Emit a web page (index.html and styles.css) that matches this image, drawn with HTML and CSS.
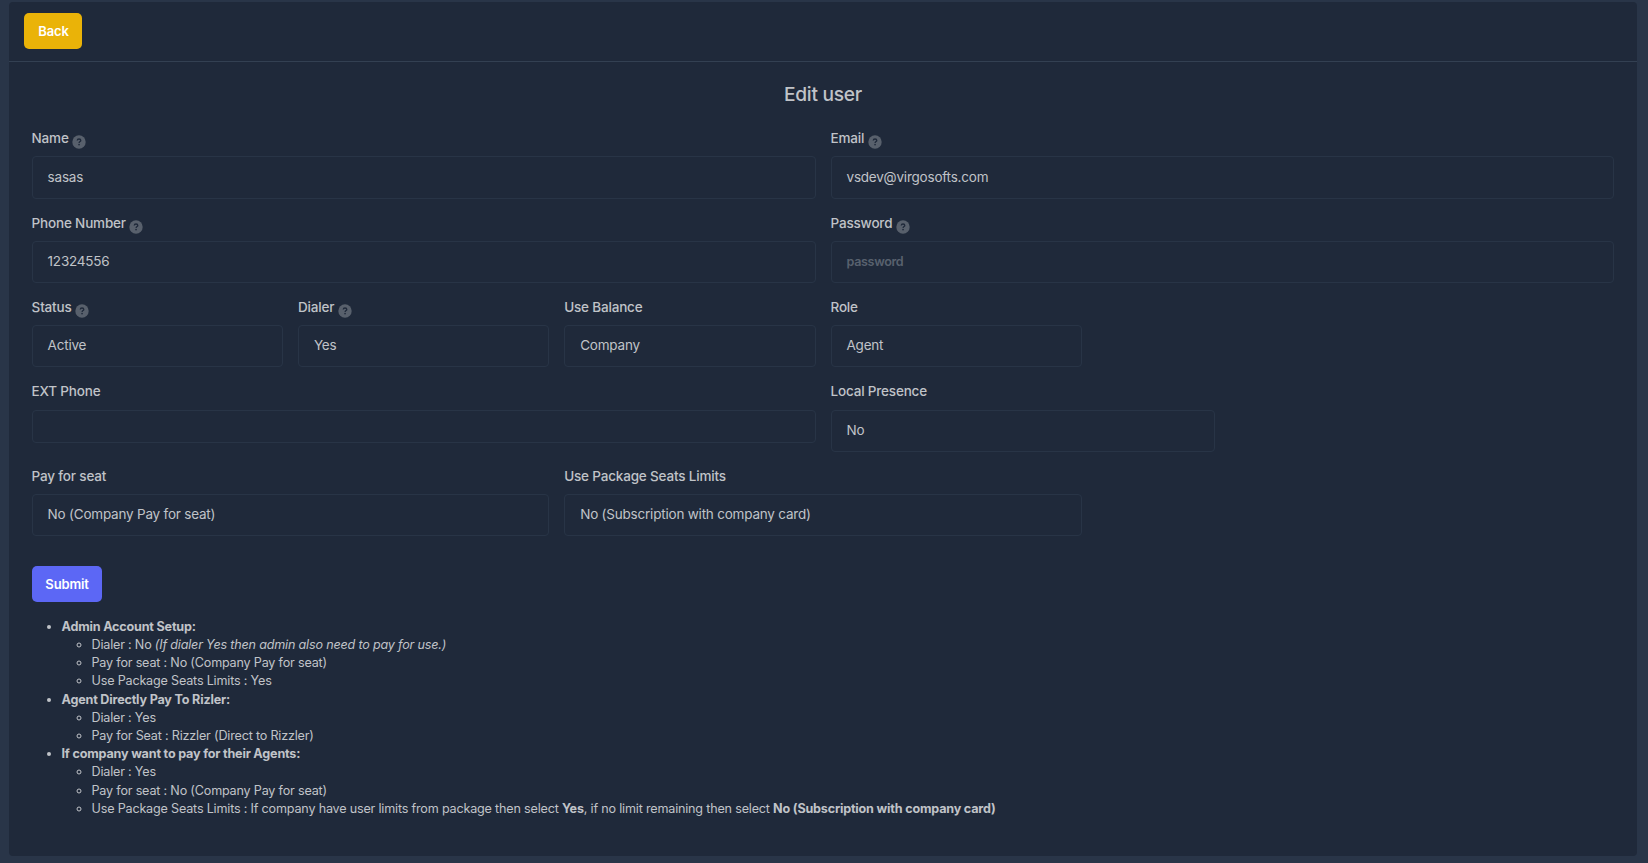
FILE: index.html
```
<!DOCTYPE html>
<html lang="en">
<head>
<meta charset="utf-8">
<title>Edit user</title>
<link rel="stylesheet" href="styles.css">
</head>
<body>
<svg width="0" height="0" class="sprite" aria-hidden="true">
  <symbol id="help" viewBox="0 0 14 14">
    <circle cx="7" cy="7" r="6.7" fill="#58606c"/>
    <path d="M5.2 5.5C5.3 4.4 6 4 7 4c1.100 0 1.800.5 1.800 1.400C8.800 6.600 7.100 6.600 7.100 7.900" fill="none" stroke="#1f293a" stroke-width="1.300"/>
    <rect x="6.300" y="8.900" width="1.500" height="1.400" fill="#1f293a"/>
  </symbol>
</svg>
<main class="card">
  <header class="card-header"><button class="btn btn-warning">Back</button></header>
  <div class="card-body">
    <h1 class="title">Edit user</h1>
    <form class="form">
      <div class="field half"><div class="label">Name <svg class="help"><use href="#help"/></svg></div><div class="control lead">sasas</div></div>
      <div class="field half"><div class="label">Email <svg class="help"><use href="#help"/></svg></div><div class="control lead">vsdev@virgosofts.com</div></div>
      <div class="field half"><div class="label">Phone Number <svg class="help"><use href="#help"/></svg></div><div class="control">12324556</div></div>
      <div class="field half"><div class="label">Password <svg class="help"><use href="#help"/></svg></div><div class="control placeholder">password</div></div>
      <div class="field sixth"><div class="label">Status <svg class="help"><use href="#help"/></svg></div><div class="control">Active</div></div>
      <div class="field sixth"><div class="label">Dialer <svg class="help"><use href="#help"/></svg></div><div class="control">Yes</div></div>
      <div class="field sixth"><div class="label">Use Balance</div><div class="control">Company</div></div>
      <div class="field sixth last"><div class="label">Role</div><div class="control">Agent</div></div>
      <div class="field half"><div class="label">EXT Phone</div><div class="control short"></div></div>
      <div class="field quarter last"><div class="label">Local Presence</div><div class="control">No</div></div>
      <div class="field third"><div class="label">Pay for seat</div><div class="control">No (Company Pay for seat)</div></div>
      <div class="field third"><div class="label">Use Package Seats Limits</div><div class="control">No (Subscription with company card)</div></div>
    </form>
    <div class="footer">
      <button class="btn btn-primary">Submit</button>
      <ul class="notes">
        <li><b>Admin Account Setup:</b>
          <ul>
            <li>Dialer : No <i>(If dialer Yes then admin also need to pay for use.)</i></li>
            <li>Pay for seat : No (Company Pay for seat)</li>
            <li>Use Package Seats Limits : Yes</li>
          </ul>
        </li>
        <li><b>Agent Directly Pay To Rizler:</b>
          <ul>
            <li>Dialer : Yes</li>
            <li>Pay for Seat : Rizzler (Direct to Rizzler)</li>
          </ul>
        </li>
        <li><b>If company want to pay for their Agents:</b>
          <ul>
            <li>Dialer : Yes</li>
            <li>Pay for seat : No (Company Pay for seat)</li>
            <li>Use Package Seats Limits : If company have user limits from package then select <b>Yes</b>, if no limit remaining then select <b>No (Subscription with company card)</b></li>
          </ul>
        </li>
      </ul>
    </div>
  </div>
</main>
</body>
</html>
```
FILE: styles.css
```
* { box-sizing: border-box; }
body {
  margin: 0;
  height: 863px;
  padding: 2px 11px 7px 9px;
  background: #293548;
  color: #c0c3c8;
  font: 400 12.600px/18.200px Inter, "Liberation Sans", sans-serif;
  overflow: hidden;
}
.sprite { position: absolute; }
.card { height: 854px; background: #1f293a; border-radius: 4px; }
.card-header { height: 60px; padding: 11px 15px 0; border-bottom: 1px solid #334052; }
.card-body { padding: 0 15.200px 0 15px; }
.btn {
  display: block;
  height: 36px;
  border: 0;
  border-radius: 5px;
  padding: 0 0 0 1px;
  color: #fff;
  font: 600 13px/36px Inter, sans-serif;
  letter-spacing: -0.15px;
}
.btn-warning { width: 58px; background: #eab308; }
.btn-primary { width: 70px; background: #5c67f5; }
.title {
  margin: 0;
  padding-top: 18.400px;
  height: 66.400px;
  text-align: center;
  font-size: 19.200px;
  line-height: 28px;
  font-weight: 500;
  letter-spacing: -0.3px;
}
.form { display: grid; grid-template-columns: repeat(12, 1fr); grid-auto-rows: 84.400px; }
.field { padding: 0 7.400px 0 7.600px; }
.half { grid-column: span 6; }
.sixth { grid-column: span 2; }
.quarter { grid-column: span 3; }
.third { grid-column: span 4; }
.sixth.last { grid-column: 7 / span 2; }
.quarter.last { grid-column: 7 / span 3; }
.label {
  display: flex;
  height: 28px;
  padding-top: 0.800px;
  gap: 3.500px;
  font-weight: 500;
  font-size: 13.500px;
  line-height: 19px;
  letter-spacing: -0.18px;
}
.help { width: 14px; height: 14px; margin-top: 6.200px; }
.control {
  height: 42.200px;
  padding: 0 15px;
  border: 1px solid #283446;
  border-radius: 4px;
  font-size: 13.500px;
  line-height: 38.400px;
  letter-spacing: -0.21px;
}
.lead { line-height: 41px; }
.short { height: 33px; }
.placeholder { color: #58616e; font-size: 12.600px; line-height: 40px; font-weight: 600; letter-spacing: -0.35px; }
.footer { padding: 15.600px 7.500px 0; }
.notes { margin: 15.800px 0 0; padding-left: 30px; letter-spacing: -0.19px; }
.notes ul { margin: 0; padding-left: 30px; }
.notes b { font-weight: 700; }
```
